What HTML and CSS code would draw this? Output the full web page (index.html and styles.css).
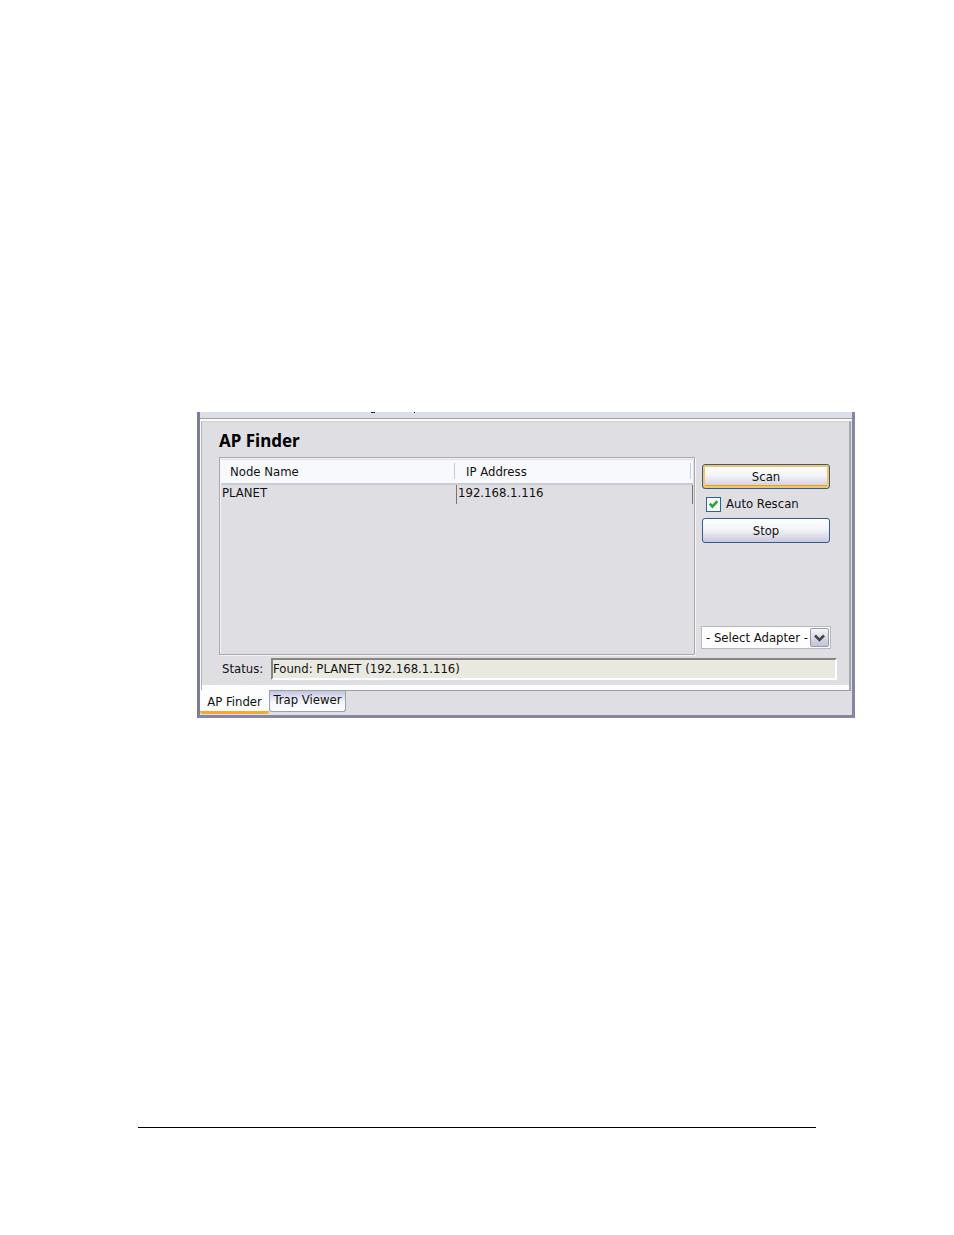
FILE: index.html
```html
<!DOCTYPE html>
<html lang="en">
<head>
<meta charset="utf-8">
<title>AP Finder</title>
<link rel="stylesheet" href="styles.css">
</head>
<body>
<main class="window">
  <div class="strip">
    <svg class="strip-marks" width="50" height="2" viewBox="0 0 50 2" aria-hidden="true"><path d="M1 .5h4M44.5 0v1" stroke="#222" fill="none"/></svg>
  </div>
  <div class="panel">
    <section class="content">
      <h1 class="title">AP Finder</h1>
      <div class="work">
        <div class="list">
          <table class="nodes">
            <thead><tr><th class="name-col">Node Name</th><th>IP Address</th></tr></thead>
            <tbody><tr><td>PLANET</td><td>192.168.1.116</td></tr></tbody>
          </table>
        </div>
        <div class="actions">
          <button class="btn btn-focus" type="button">Scan</button>
          <label class="check" for="auto">
            <input class="check-box" type="checkbox" id="auto" checked>
            <svg class="check-mark" width="9" height="9" viewBox="0 0 9 9" aria-hidden="true"><path d="M.8 3.6 3.4 6.6 8.4 1.2" fill="none" stroke="#2ba336" stroke-width="2.6"/></svg>
            <span>Auto Rescan</span>
          </label>
          <button class="btn" type="button">Stop</button>
          <div class="adapter">
            <select class="adapter-select" aria-label="Adapter"><option>- Select Adapter -</option></select>
            <span class="adapter-arrow"><svg width="11" height="8" viewBox="0 0 11 8" aria-hidden="true"><path d="M1 1.5 5.5 6 10 1.5" fill="none" stroke="#46464e" stroke-width="2.6"/></svg></span>
          </div>
        </div>
      </div>
      <div class="status">
        <label for="status">Status:</label>
        <input class="status-field" id="status" type="text" readonly value="Found: PLANET (192.168.1.116)">
      </div>
    </section>
  </div>
  <nav class="tabs">
    <button class="tab tab-active" type="button">AP Finder</button>
    <button class="tab" type="button">Trap Viewer</button>
  </nav>
</main>
<hr class="rule">
</body>
</html>
```
FILE: styles.css
```css
* { box-sizing: border-box; }
body {
  margin: 0;
  min-height: 1235px;
  padding: 412px 0 0;
  background: #fff;
  color: #111;
  font: 13px/16px "DejaVu Sans Condensed", "Noto Sans", sans-serif;
}
button, input, select { font: inherit; color: inherit; }
.window {
  margin: 0 99px 0 197px;
  background: #dfdee3;
  border: solid #8685a3;
  border-width: 0 3px 3px;
  border-left-color: #7b7b9b;
}
.strip {
  height: 7px;
  background: #dcdee9;
  border-bottom: 1px solid #a0a0aa;
}
.strip-marks { display: block; margin-left: 170px; }
.panel {
  border-top: 2px solid #fbfbfb;
  border-left: 1px solid #fbfbfb;
}
.content {
  margin-right: 1px;
  padding: 10px 13px 10px 17px;
  border-top: 1px solid #d3d0c5;
  border-left: 1px solid #b2b2b6;
  border-right: 2px solid #9fa9aa;
  box-shadow: inset 0 -5px #fdfdfd;
}
.title {
  margin: 0 0 7px;
  font: bold 17px/18px "Noto Sans", sans-serif;
  color: #000;
}
.work {
  display: grid;
  grid-template-columns: minmax(0, 1fr) 130px;
  gap: 6px;
  padding-right: 5px;
}
.list {
  height: 198px;
  border: 1px solid #aaaaad;
  box-shadow: inset 1px 1px #f4f4f6, 1px 1px #f4f4f6;
  padding: 2px 1px 0;
}
.nodes { width: 100%; border-collapse: separate; border-spacing: 0; table-layout: fixed; }
.name-col { width: 50%; }
.nodes th {
  height: 25px;
  padding: 0 0 0 9px;
  text-align: left;
  font-weight: normal;
  background: linear-gradient(#c9cadc, #c9cadc) right 2px top 3px / 1px 16px no-repeat, #f8f9fd;
  border-bottom: 2px solid #cbccda;
}
.nodes td {
  height: 19px;
  padding: 0 0 3px 1px;
  border-right: 1px solid #77777b;
}
.actions { display: flex; flex-direction: column; padding: 7px 0 6px; }
.btn {
  height: 25px;
  margin: 0 1px;
  padding: 0;
  border: 1px solid #2f5d8e;
  border-radius: 3px;
  background: linear-gradient(#fff, #f4f4f9 45%, #c9c9de);
}
.btn-focus {
  box-shadow: inset 0 0 0 2px #f6c462, inset 0 -3px #e8a01c;
}
.check {
  position: relative;
  display: flex;
  align-items: center;
  gap: 5px;
  height: 29px;
  padding: 1px 0 0 5px;
}
.check-box {
  appearance: none;
  width: 15px;
  height: 15px;
  margin: 0;
  border: 1px solid #2a6590;
  background: #f8faf8;
}
.check-mark { position: absolute; left: 8px; top: 11px; pointer-events: none; }
.adapter { position: relative; margin-top: auto; }
.adapter-select {
  display: block;
  appearance: none;
  width: 100%;
  height: 23px;
  padding: 0 20px 0 4px;
  border: 1px solid #b9b9bd;
  border-radius: 0;
  background: #fdfdfd;
}
.adapter-arrow {
  position: absolute;
  top: 2px;
  right: 2px;
  display: grid;
  place-items: center;
  width: 19px;
  height: 19px;
  border: 1px solid #9898ab;
  border-radius: 2px;
  background: linear-gradient(#f4f4fa, #c2c2d8);
  pointer-events: none;
}
.status { display: flex; align-items: center; gap: 7px; padding: 3px 0 0 3px; }
.status label { flex: none; width: 42px; }
.status-field {
  flex: 1;
  min-width: 0;
  height: 22px;
  margin-right: -1px;
  padding: 0 0 1px;
  border: 2px solid;
  border-color: #86867f #fff #fff #86867f;
  background: #e9e9e1;
}
.tabs {
  display: flex;
  align-items: flex-start;
  height: 25px;
  margin-right: 1px;
  border-top: 1px solid #94a0a2;
}
.tab {
  width: 77px;
  height: 21px;
  padding: 0 0 2px;
  border: 1px solid #93a3b3;
  border-top: 0;
  border-radius: 0 0 3px 3px;
  background: linear-gradient(#c3c4e0, #f6f6fb 55%, #fdfdfe);
}
.tab-active {
  width: 69px;
  height: 24px;
  margin-top: -1px;
  padding: 2px 0 0;
  border: 0;
  border-bottom: 3px solid #f2a93a;
  background: #fdfdfd;
}
.rule {
  height: 1px;
  margin: 409px 138px 0;
  border: 0;
  background: #000;
}
```
